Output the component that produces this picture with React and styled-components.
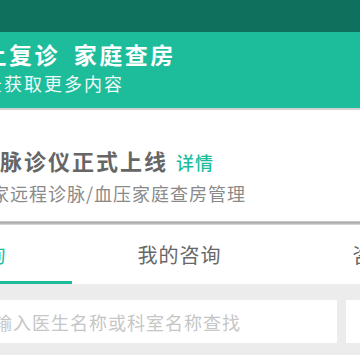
import React from 'react';
import styled, { createGlobalStyle } from 'styled-components';

const GlobalStyle = createGlobalStyle`
  html, body {
    margin: 0;
    padding: 0;
    background: #ffffff;
  }
  * {
    box-sizing: border-box;
  }
`;

const green = '#1dbd9b';

const Screen = styled.div`
  width: 360px;
  height: 360px;
  overflow: hidden;
  background: #ffffff;
  font-family: "Noto Sans CJK SC", "Noto Sans", sans-serif;
`;

const StatusBar = styled.div`
  height: 32px;
  background: #10705e;
`;

const Banner = styled.div`
  height: 78px;
  padding-top: 8px;
  background: ${green};
  border-bottom: 2px solid #d2d2d2;
  color: #ffffff;
  white-space: nowrap;
`;

const BannerTitle = styled.div`
  margin-left: -42px;
  font-size: 23px;
  font-weight: 700;
  line-height: 28px;
  letter-spacing: 2.5px;
  word-spacing: 6px;
`;

const BannerSub = styled.div`
  margin-top: 3px;
  margin-left: -36px;
  font-size: 18px;
  line-height: 24px;
  letter-spacing: 2px;
  opacity: 0.92;
`;

const Notice = styled.div`
  height: 111px;
  padding-top: 35px;
  white-space: nowrap;
`;

const NoticeTitle = styled.div`
  margin-left: -48px;
  font-size: 22px;
  font-weight: 700;
  line-height: 30px;
  letter-spacing: 2px;
  color: #666666;
`;

const More = styled.span`
  margin-left: 8px;
  font-size: 18px;
  font-weight: 500;
  letter-spacing: 1px;
  color: ${green};
`;

const NoticeSub = styled.div`
  margin-top: 3px;
  margin-left: -28px;
  font-size: 18px;
  line-height: 26px;
  letter-spacing: 1px;
  color: #8a8a8a;
`;

const Divider = styled.div`
  height: 4px;
  background: linear-gradient(#d6d6d6, #a9a9a9 40%, #bdbdbd 70%, #e6e6e6);
`;

const Tabs = styled.div`
  display: flex;
  height: 59px;
  margin-left: -143px;
`;

const Tab = styled.div`
  flex: none;
  width: 215px;
  display: flex;
  align-items: center;
  justify-content: center;
  padding-top: 3px;
  font-size: 20px;
  letter-spacing: 1px;
  white-space: nowrap;
  color: ${(p) => (p.$active ? green : '#686868')};
  border-bottom: 3px solid ${(p) => (p.$active ? green : 'transparent')};
`;

const SearchArea = styled.div`
  display: flex;
  gap: 9px;
  height: 71px;
  padding: 16px 0 12px;
  margin-left: -40px;
  background: #ececec;
`;

const SearchInput = styled.input`
  flex: none;
  width: 377px;
  height: 43px;
  padding: 0 0 0 15px;
  border: none;
  outline: none;
  background: #ffffff;
  font-family: inherit;
  font-size: 18px;
  letter-spacing: 1px;
  color: #333333;

  &::placeholder {
    color: #c6c6c6;
  }
`;

const SearchButton = styled.button`
  flex: none;
  width: 80px;
  height: 43px;
  border: none;
  background: #ffffff;
  font-family: inherit;
  font-size: 18px;
  color: ${green};
`;

export default function App() {
  return (
    <>
      <GlobalStyle />
      <Screen>
        <StatusBar />
        <Banner>
          <BannerTitle>线上复诊 家庭查房</BannerTitle>
          <BannerSub>登录获取更多内容</BannerSub>
        </Banner>
        <Notice>
          <NoticeTitle>
            智能脉诊仪正式上线<More>详情</More>
          </NoticeTitle>
          <NoticeSub>专家远程诊脉/血压家庭查房管理</NoticeSub>
        </Notice>
        <Divider />
        <Tabs>
          <Tab $active>医生咨询</Tab>
          <Tab>我的咨询</Tab>
          <Tab>咨询记录</Tab>
        </Tabs>
        <SearchArea>
          <SearchInput placeholder="请输入医生名称或科室名称查找" />
          <SearchButton>搜索</SearchButton>
        </SearchArea>
      </Screen>
    </>
  );
}
